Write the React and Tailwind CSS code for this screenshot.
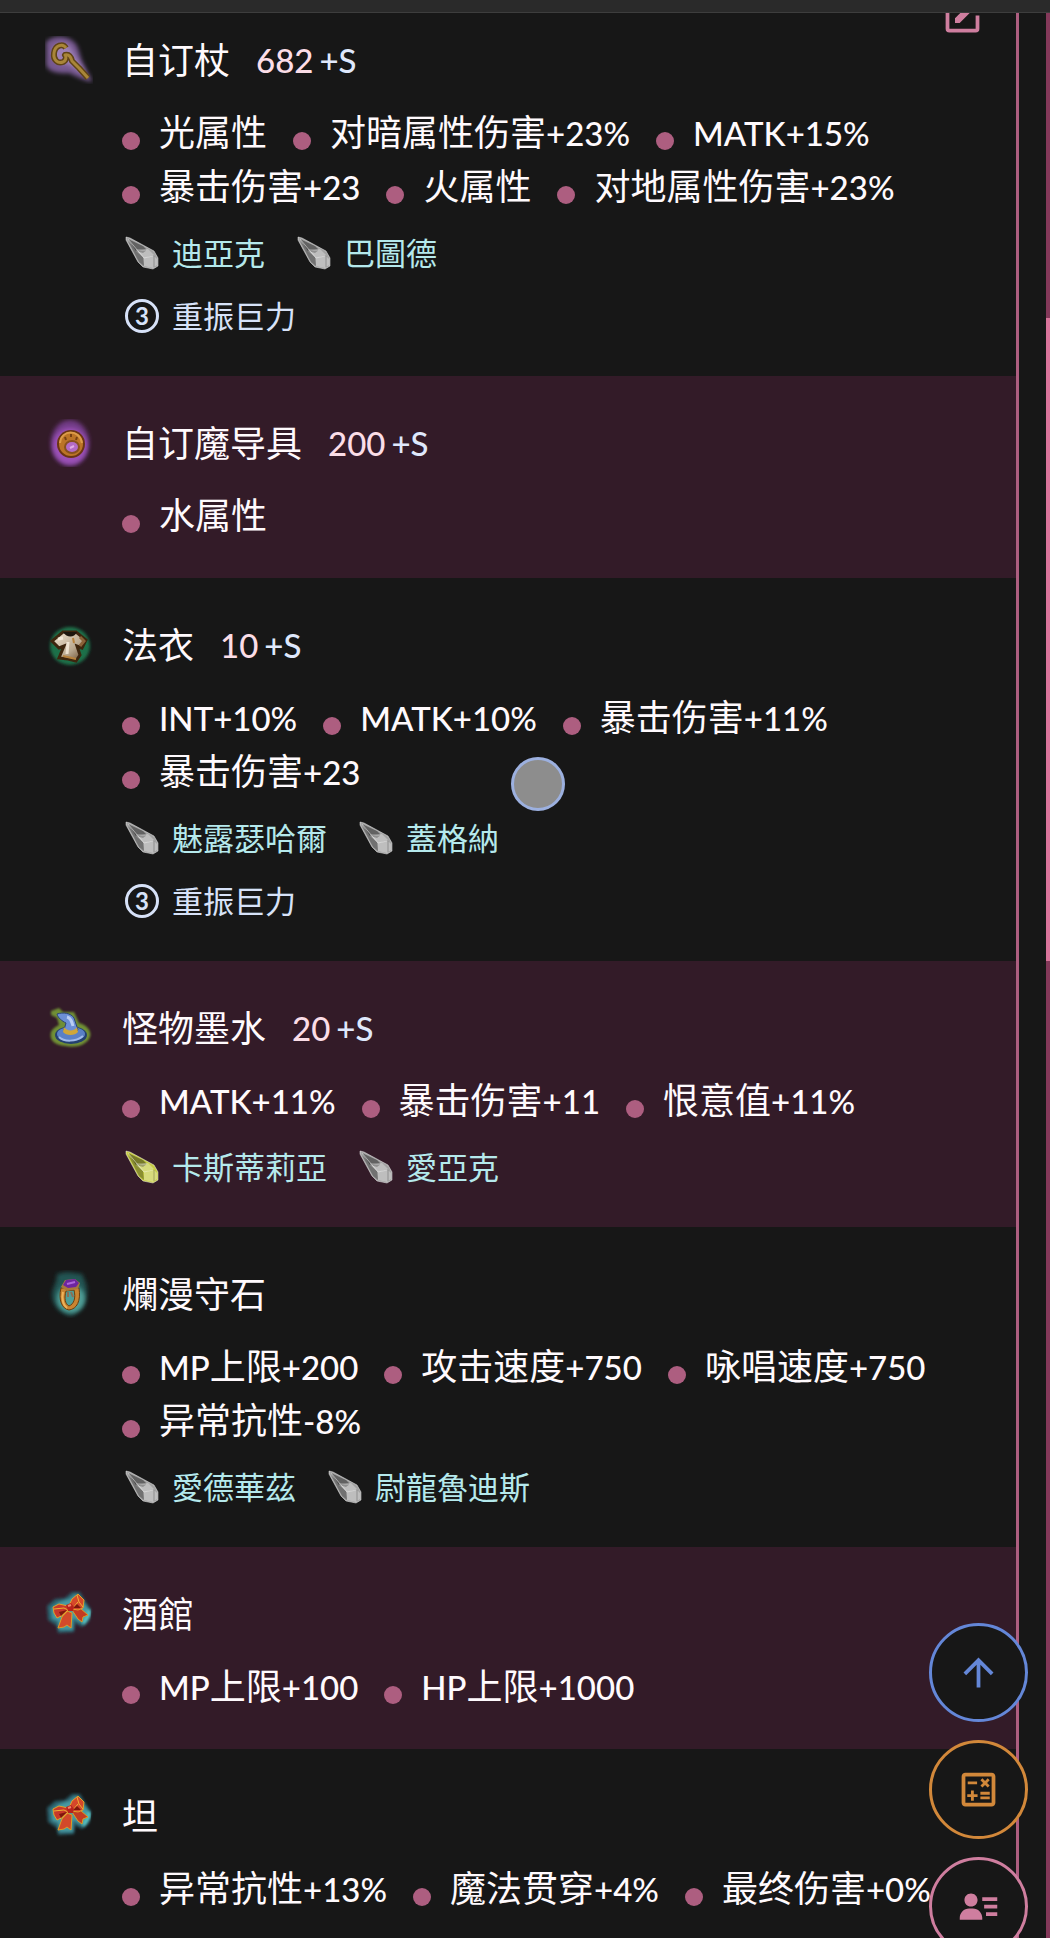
import React from 'react';
import { MdArrowUpward, MdOutlineCalculate } from 'react-icons/md';
import { BiSolidUserDetail } from 'react-icons/bi';

const StaffIcon = () => (
  <svg viewBox="0 0 48 48" className="w-12 h-12">
    <defs>
      <filter id="staff-glow" x="-20%" y="-20%" width="140%" height="140%">
        <feGaussianBlur stdDeviation="2" />
      </filter>
    </defs>
    <path d="M1 6C8 -1 22 -1 30 7C35 13 34 20 39 29C42 36 46 41 47 46C38 44 31 40 24 37C14 38 2 36 1 28Z" fill="#76588f" filter="url(#staff-glow)" />
    <path d="M8 12C13 5 24 6 27 14C31 22 36 29 41 38C31 35 25 27 19 28C10 28 5 20 8 12Z" fill="#b79bd0" opacity="0.6" filter="url(#staff-glow)" />
    <path d="M21 12C18 7 10 9 9 17C8 24 13 28 18 26C22 24 21 20 20 19C24 18 26 21 27 25L34 32L43 42" fill="none" stroke="#5f4317" strokeWidth="6" strokeLinejoin="round" />
    <path d="M21 12C18 7 10 9 9 17C8 24 13 28 18 26C22 24 21 20 20 19C24 18 26 21 27 25L34 32L43 42" fill="none" stroke="#a98638" strokeWidth="3" strokeLinejoin="round" />
  </svg>
);

const DeviceIcon = () => (
  <svg viewBox="0 0 48 48" className="w-12 h-12">
    <defs>
      <filter id="device-glow" x="-20%" y="-20%" width="140%" height="140%">
        <feGaussianBlur stdDeviation="2" />
      </filter>
    </defs>
    <ellipse cx="25" cy="24" rx="19" ry="23" fill="#713b86" filter="url(#device-glow)" />
    <ellipse cx="25" cy="27" rx="17" ry="18" fill="#9c51b8" filter="url(#device-glow)" />
    <circle cx="26" cy="25" r="14" fill="#6b3512" />
    <circle cx="26" cy="25" r="12" fill="#bb7426" />
    <path d="M15 24C16 10 35 10 37 24" fill="none" stroke="#dc9c49" strokeWidth="2" />
    <path d="M20 18L21 21M26 15V18M32 18L31 21" stroke="#754012" strokeWidth="2" />
    <ellipse cx="27" cy="28" rx="8" ry="7" fill="#87501f" />
    <ellipse cx="27" cy="28" rx="6" ry="5" fill="#b36bc6" />
    <path d="M25 29L29 27" stroke="#e1ace7" strokeWidth="2" />
  </svg>
);

const RobeIcon = () => (
  <svg viewBox="0 0 48 48" className="w-12 h-12">
    <defs>
      <filter id="robe-glow" x="-20%" y="-20%" width="140%" height="140%">
        <feGaussianBlur stdDeviation="1.5" />
      </filter>
      <filter id="robe-soft">
        <feGaussianBlur stdDeviation="0.6" />
      </filter>
      <linearGradient id="robe-cloth" x1="0" y1="0" x2="1" y2="1">
        <stop offset="0" stopColor="#f3e8d5" />
        <stop offset="0.6" stopColor="#b9a88f" />
        <stop offset="1" stopColor="#5e3d1d" />
      </linearGradient>
    </defs>
    <ellipse cx="25" cy="25" rx="20" ry="19" fill="#1d7048" filter="url(#robe-glow)" />
    <g filter="url(#robe-soft)">
      <path d="M18 11L31 11L41 19L37 27L32 25L35 34L31 40L23 38L14 37L19 25L14 27L7 20Z" fill="url(#robe-cloth)" stroke="#3d2510" strokeWidth="3" />
      <path d="M18 11C22 17 29 17 32 11Z" fill="#1c140c" />
      <path d="M35 16L39 20L35 25" fill="none" stroke="#8a6238" strokeWidth="3" />
      <path d="M28 17L29 22M18 35L31 38" stroke="#b6823c" strokeWidth="2" />
      <path d="M23 21L22 33M13 18L18 17" stroke="#fff7e8" strokeWidth="3" opacity="0.7" />
    </g>
  </svg>
);

const HatIcon = () => (
  <svg viewBox="0 0 48 48" className="w-12 h-12">
    <defs>
      <filter id="hat-glow" x="-20%" y="-20%" width="140%" height="140%">
        <feGaussianBlur stdDeviation="1" />
      </filter>
    </defs>
    <path d="M6 7L14 4L18 8L29 8L34 19C42 21 47 27 45 33C41 42 30 44 20 42C9 41 4 36 6 28C7 25 10 23 14 21L12 14L6 11Z" fill="#6f8f34" filter="url(#hat-glow)" />
    <ellipse cx="26" cy="31" rx="16" ry="9" fill="#24406f" />
    <ellipse cx="26" cy="30" rx="14" ry="7" fill="#5a80c6" />
    <path d="M14 33C19 38 31 38 38 32" fill="none" stroke="#9fb9ea" strokeWidth="2" />
    <path d="M12 10C18 8 26 9 29 14L33 26C30 30 22 30 19 26L21 19C17 17 13 14 12 10Z" fill="#6c8fd6" stroke="#2b4474" strokeWidth="1" />
    <path d="M19 23C22 28 30 27 32 23L33 28C30 32 21 32 18 28Z" fill="#cfa638" />
    <path d="M22 13C26 14 27 18 28 22" fill="none" stroke="#b9cdf3" strokeWidth="3" />
  </svg>
);

const RingIcon = () => (
  <svg viewBox="0 0 48 48" className="w-12 h-12">
    <defs>
      <filter id="ring-glow" x="-20%" y="-20%" width="140%" height="140%">
        <feGaussianBlur stdDeviation="2" />
      </filter>
    </defs>
    <path d="M12 4L22 2L37 4L41 14C44 26 39 38 27 46C16 44 7 36 7 24C8 17 12 13 12 4Z" fill="#235552" filter="url(#ring-glow)" />
    <ellipse cx="26" cy="29" rx="14" ry="14" fill="#4f9f97" filter="url(#ring-glow)" />
    <path fillRule="evenodd" d="M16 18C13 30 17 39 24 40C32 39 36 31 34 18ZM21 21C19 28 20 34 24 36C29 34 31 28 29 20Z" fill="#c98431" stroke="#6b3e0e" strokeWidth="1" />
    <path d="M18 22C16 30 19 36 22 38" fill="none" stroke="#efb35a" strokeWidth="2" />
    <path d="M26 22L28 27M23 22V27" fill="none" stroke="#8b6f55" strokeWidth="2" />
    <path d="M16 17L20 10L30 9L35 13L33 19L22 21Z" fill="#a8783d" />
    <path d="M18 15L21 10L30 9L34 13L31 17L23 18Z" fill="#6d25a0" />
    <path d="M22 14L30 12" stroke="#ad68db" strokeWidth="2" />
  </svg>
);

const BowIcon = () => (
  <svg viewBox="0 0 48 48" className="w-12 h-12">
    <defs>
      <filter id="bow-glow" x="-20%" y="-20%" width="140%" height="140%">
        <feGaussianBlur stdDeviation="1.5" />
      </filter>
      <filter id="bow-soft">
        <feGaussianBlur stdDeviation="0.5" />
      </filter>
    </defs>
    <path d="M2 16L10 9L20 8L27 2L35 2L40 11L46 20L44 31L37 37L30 33L29 42L13 43L12 36L3 30Z" fill="#2b5f6b" filter="url(#bow-glow)" />
    <path d="M6 18L14 12L24 9L31 4L39 13L45 21L41 30L36 33L28 28L28 40L14 40L13 31L7 29Z" fill="#479aa3" filter="url(#bow-glow)" />
    <path d="M44 20L44 25L38 34" fill="none" stroke="#61d4cf" strokeWidth="3" filter="url(#bow-glow)" />
    <g filter="url(#bow-soft)">
      <path d="M22 21L17 27L13 38L19 37L22 35L26 38L27 23Z" fill="#d2482a" stroke="#dc9b25" strokeWidth="1" />
      <path d="M27 20L33 29L37 32L38 27L43 25L35 18Z" fill="#c23a20" stroke="#dc9b25" strokeWidth="1" />
      <path d="M23 16L14 14L8 17L9 23L12 28L18 25L24 20Z" fill="#c8382a" stroke="#e0a12a" strokeWidth="1" />
      <path d="M9 19L19 18L23 20L15 27" fill="none" stroke="#efb133" strokeWidth="1" />
      <path d="M14 22L22 20L16 26Z" fill="#7e160e" />
      <path d="M24 16L27 9L33 4L39 10L38 18L33 20L27 19Z" fill="#d5462c" stroke="#e0a12a" strokeWidth="1" />
      <path d="M32 5L34 12L38 17M28 18L33 12" fill="none" stroke="#efb133" strokeWidth="1" />
      <path d="M28 18L32 14L36 18Z" fill="#7e160e" />
      <path d="M21 15L26 13L29 17L28 21L23 21Z" fill="#b8241d" />
      <path d="M23 16L26 15" stroke="#f08468" strokeWidth="2" />
    </g>
  </svg>
);

const Crystal = ({ yellow }) => (
  <svg
    viewBox="0 0 34 34"
    className={yellow ? 'w-[34px] h-[34px] shrink-0 text-[#c6cc45]' : 'w-[34px] h-[34px] shrink-0 text-[#a3a3a3]'}
  >
    <path d="M1 1L5 2L29 15L33 22V30L28 33L18 31L13 26L1 4Z" fill="currentColor" />
    <path d="M3 3L18 10L22 14L18 17L11 15Z" fill="#000" opacity="0.4" />
    <path d="M3 5L18 21L19 30L14 26Z" fill="#000" opacity="0.3" />
    <path d="M11 15L23 13L29 19L19 22Z" fill="#fff" opacity="0.3" />
    <path d="M19 22L29 20L32 23V29L28 32L19 30Z" fill="#fff" opacity="0.3" />
    <path d="M29 20V31" stroke="#000" strokeWidth="1" opacity="0.25" />
    <path d="M1 1L5 2L29 15L33 22V30L28 33L18 31L13 26L1 4ZM3 3L19 22L28 20M11 14L22 14" fill="none" stroke="#fff" strokeWidth="1" opacity="0.45" />
  </svg>
);

const EditIcon = () => (
  <svg viewBox="0 0 24 24" fill="currentColor" className="w-[45px] h-[45px]">
    <path d="M5 3C3.89 3 3 3.89 3 5V19A2 2 0 0 0 5 21H19A2 2 0 0 0 21 19V12H19V19H5V5H12V3H5M17.78 4C17.61 4 17.43 4.07 17.3 4.2L16.08 5.41L18.58 7.91L19.8 6.7C20.06 6.44 20.06 6 19.8 5.75L18.25 4.2C18.12 4.07 17.95 4 17.78 4M15.37 6.12L8 13.5V16H10.5L17.87 8.62L15.37 6.12Z" />
  </svg>
);

const equipments = [
  {
    icon: StaffIcon,
    name: '自订杖',
    base: 682,
    stats: ['光属性', '对暗属性伤害+23%', 'MATK+15%', '暴击伤害+23', '火属性', '对地属性伤害+23%'],
    crystals: [{ name: '迪亞克' }, { name: '巴圖德' }],
    registlet: '重振巨力',
  },
  {
    icon: DeviceIcon,
    name: '自订魔导具',
    base: 200,
    stats: ['水属性'],
  },
  {
    icon: RobeIcon,
    name: '法衣',
    base: 10,
    stats: ['INT+10%', 'MATK+10%', '暴击伤害+11%', '暴击伤害+23'],
    crystals: [{ name: '魅露瑟哈爾' }, { name: '蓋格納' }],
    registlet: '重振巨力',
  },
  {
    icon: HatIcon,
    name: '怪物墨水',
    base: 20,
    stats: ['MATK+11%', '暴击伤害+11', '恨意值+11%'],
    crystals: [{ name: '卡斯蒂莉亞', yellow: true }, { name: '愛亞克' }],
  },
  {
    icon: RingIcon,
    name: '爛漫守石',
    stats: ['MP上限+200', '攻击速度+750', '咏唱速度+750', '异常抗性-8%'],
    crystals: [{ name: '愛德華茲' }, { name: '尉龍魯迪斯' }],
  },
  {
    icon: BowIcon,
    name: '酒館',
    stats: ['MP上限+100', 'HP上限+1000'],
  },
  {
    icon: BowIcon,
    name: '坦',
    stats: ['异常抗性+13%', '魔法贯穿+4%', '最终伤害+0%'],
  },
];

// Latin letters and digits are set a little smaller than the Chinese ones
const StatText = ({ text }) => (
  <span className="whitespace-nowrap">
    {text.split(/([\x21-\x7e]+)/).filter(Boolean).map((part, i) => (
      /^[\x21-\x7e]/.test(part)
        ? <span key={i} className="text-[33px] leading-none font-medium">{part}</span>
        : part
    ))}
  </span>
);

const Equipment = ({ item, first }) => {
  const Icon = item.icon;

  return (
    <li
      className={`flex items-start gap-[29px] pl-[45px] pr-8 pb-9 even:bg-[#331b28] ${first ? 'pt-5' : 'pt-10'}`}
    >
      <div className="shrink-0 h-[54px] flex items-center">
        <Icon />
      </div>
      <div className="min-w-0 flex-1">
        <h2 className="h-[54px] flex items-center text-[36px] leading-[52px]">
          <span>{item.name}</span>
          {item.base && (
            <>
              <span className="ml-[26px] text-[33px] font-medium text-[#fbdde7]">{item.base}</span>
              <span className="ml-[6px] text-[33px] font-medium text-[#dfe8fc]">+S</span>
            </>
          )}
        </h2>

        <ul className="mt-[18px] flex flex-wrap gap-x-[26px] text-[36px] leading-[52px]">
          {item.stats.map((stat) => (
            <li key={stat} className="h-[54px] flex items-center gap-[19px]">
              <span className="mt-[18px] w-[18px] h-[18px] rounded-full bg-[#ad5e80]"></span>
              <StatText text={stat} />
            </li>
          ))}
        </ul>

        {item.crystals && (
          <ul className="mt-4 flex flex-wrap gap-x-8 pl-[3px] text-[31px] leading-[48px] text-[#b5e9ec]">
            {item.crystals.map((crystal) => (
              <li key={crystal.name} className="flex items-center gap-[13px]">
                <Crystal yellow={crystal.yellow} />
                <span>{crystal.name}</span>
              </li>
            ))}
          </ul>
        )}

        {item.registlet && (
          <div className="mt-[15px] flex items-center gap-[13px] pl-[3px] text-[31px] leading-[48px] text-[#d7e2f8]">
            <span className="w-[34px] h-[34px] flex items-center justify-center rounded-full border-3 text-[24px] leading-none font-bold">3</span>
            <span>{item.registlet}</span>
          </div>
        )}
      </div>
    </li>
  );
};

const App = () => {
  return (
    <div
      lang="zh-Hans"
      className="relative h-screen overflow-hidden flex flex-col bg-[#171717] text-[#fffafd] font-['Lato','Noto_Sans_CJK_SC',sans-serif]"
    >
      <header className="h-[13px] shrink-0 bg-[#2a2a2a] border-b border-[#3d3d3d]"></header>

      <div className="flex min-h-0 flex-1">
        <main className="relative flex-1 overflow-hidden border-r-3 border-[#ad5e80]">
          <button type="button" aria-label="编辑" className="absolute -top-5 right-[31px] text-[#cf7e9f]">
            <EditIcon />
          </button>
          <ul>
            {equipments.map((item, i) => (
              <Equipment key={item.name} item={item} first={i === 0} />
            ))}
          </ul>
        </main>

        {/* Scrollbar */}
        <div className="ml-[27px] w-1 flex flex-col bg-[#84395a]">
          <div className="mt-[305px] h-[643px] bg-[#d9749b]"></div>
        </div>
      </div>

      {/* Touch pointer */}
      <div className="absolute left-[511px] top-[757px] w-[54px] h-[54px] rounded-full border-3 border-[#9cb0df] bg-[#8d8d8d]"></div>

      {/* Floating actions */}
      <div className="absolute right-[22px] -bottom-[18px] flex flex-col gap-[18px]">
        <button type="button" aria-label="回到顶部" className="w-[99px] h-[99px] flex items-center justify-center rounded-full border-3 border-[#6487d8] bg-[#171717] text-[#6487d8]">
          <MdArrowUpward className="w-[45px] h-[45px]" />
        </button>
        <button type="button" aria-label="计算" className="w-[99px] h-[99px] flex items-center justify-center rounded-full border-3 border-[#d2883a] bg-[#171717] text-[#d2883a]">
          <MdOutlineCalculate className="w-[45px] h-[45px]" />
        </button>
        <button type="button" aria-label="角色" className="w-[99px] h-[99px] flex items-center justify-center rounded-full border-3 border-[#cf7e9f] bg-[#171717] text-[#cf7e9f]">
          <BiSolidUserDetail className="w-[45px] h-[45px]" />
        </button>
      </div>
    </div>
  );
};

export default App;
